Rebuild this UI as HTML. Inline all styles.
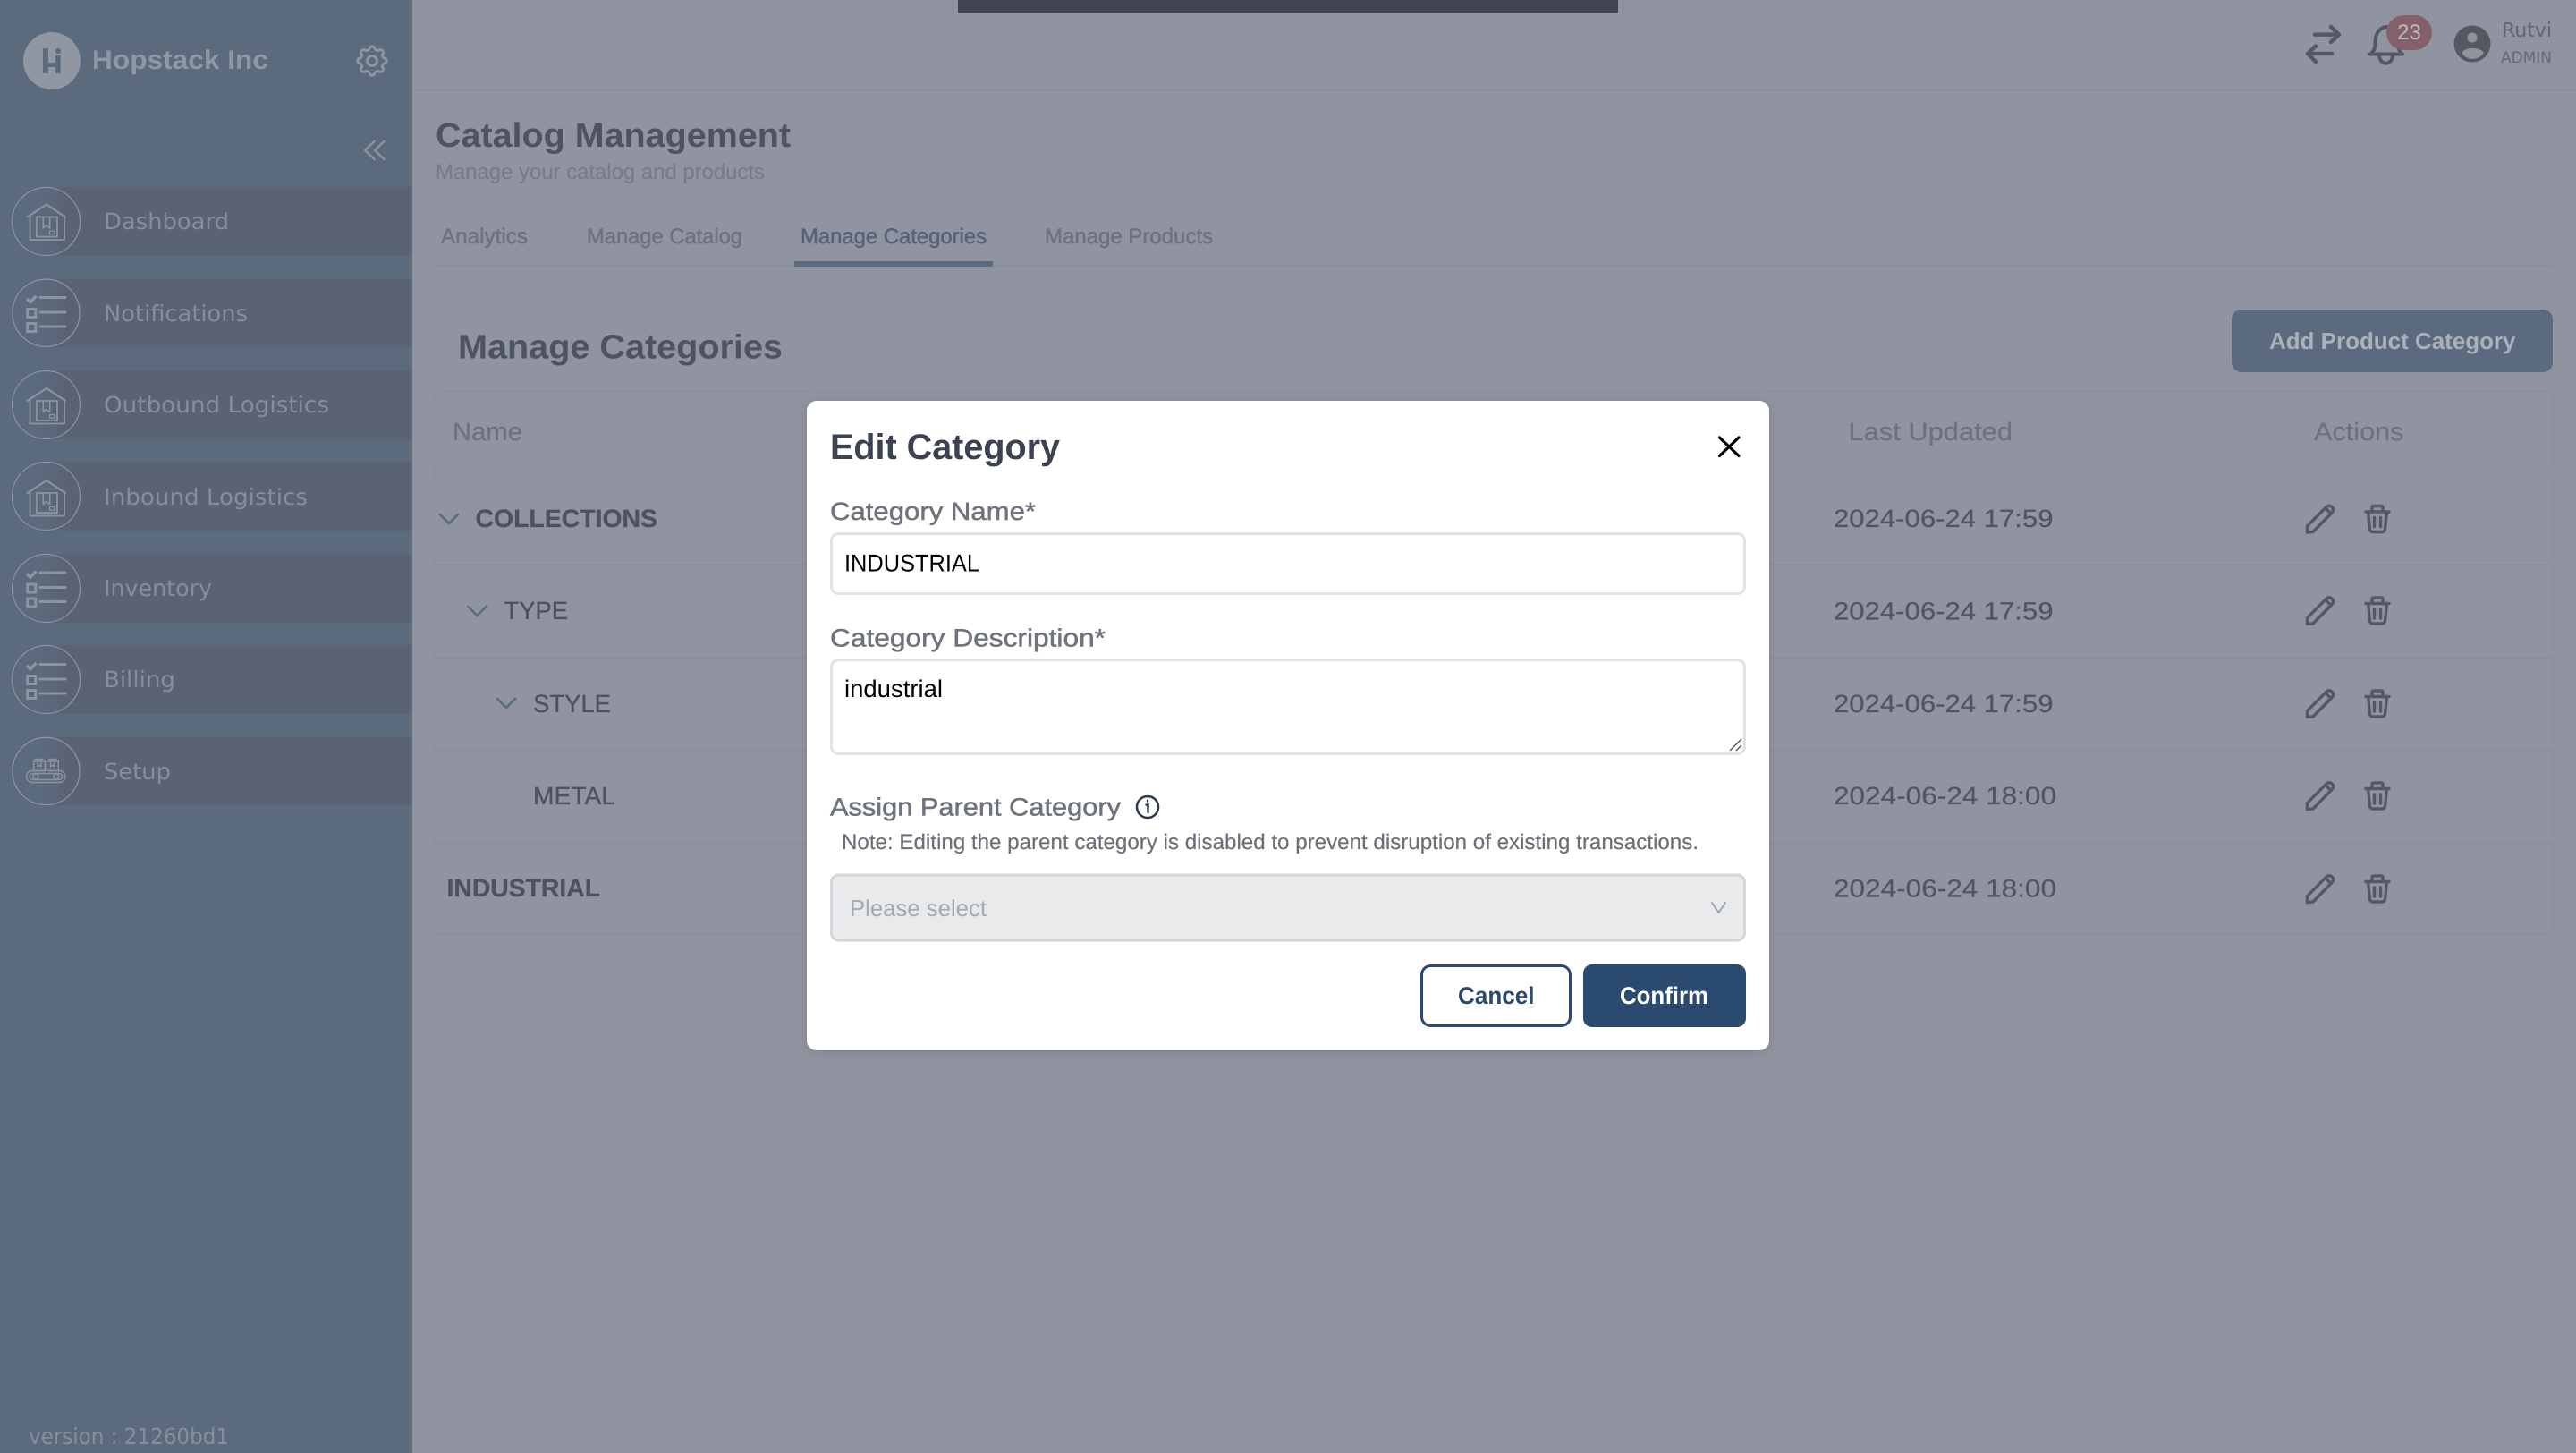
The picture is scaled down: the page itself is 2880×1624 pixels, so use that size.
<!DOCTYPE html>
<html lang="en">
<head>
<meta charset="utf-8">
<title>Catalog Management - Edit Category</title>
<style>
html,body{margin:0;padding:0;background:#8f94a0;width:2880px;height:1624px;overflow:hidden}
svg{display:block}
text{font-family:"Liberation Sans",sans-serif;text-rendering:geometricPrecision}
.m{font-family:"DejaVu Sans","Liberation Sans",sans-serif}
.nav{font-size:25px;fill:#868e9d}
.b{font-weight:bold}
.tab{font-size:24px;fill:#6c7280;stroke:#6c7280;stroke-width:.5}
.date{font-size:28px;fill:#50555f;stroke:#50555f;stroke-width:.2}
.th{font-size:28px;fill:#6d7280;stroke:#6d7280;stroke-width:.3}
.cell{font-size:28px;fill:#4d525e;stroke:#4d525e;stroke-width:.3}
.lbl{font-size:28px;fill:#6f747c;stroke:#6f747c;stroke-width:.5}
.ic{fill:none;stroke:#8d93a0;stroke-linecap:round;stroke-linejoin:round}
.act{fill:none;stroke:#535862;stroke-width:3.4;stroke-linecap:round;stroke-linejoin:round}
</style>
</head>
<body>
<svg xmlns="http://www.w3.org/2000/svg" width="2880" height="1624" viewBox="0 0 2880 1624">
<defs>
<linearGradient id="bar" gradientUnits="userSpaceOnUse" x1="45" x2="72" y1="0" y2="0">
<stop offset="0" stop-color="#5c6a7e"/><stop offset="1" stop-color="#5a6374"/>
</linearGradient>
<filter id="sh" x="-5%" y="-5%" width="110%" height="110%"><feDropShadow dx="0" dy="2" stdDeviation="6" flood-color="#000" flood-opacity=".12"/></filter>
<g id="wh" class="ic" stroke-width="1.6">
<path d="M-21 -4.5 L0.5 -18.5 L21.5 -4.5" stroke-width="2"/>
<path d="M-18 -6 V21 H20.5 V-6" stroke-width="1.8"/>
<rect x="-10.5" y="-4.5" width="23" height="22" stroke-width="1.8"/>
<path d="M-3.2 -4.5 V8 L0 5 L4.2 8 V-4.5" stroke-width="1.6"/>
<rect x="4" y="11" width="5.6" height="3.6" stroke-width="1.3"/>
</g>
<g id="li" class="ic">
<path d="M-6.5 -17.5 H21.5 M-6.5 -1 H21.5 M-6.5 15 H21.5" stroke-width="3"/>
<path d="M-21.5 -16 L-17.5 -12.5 L-11 -19" stroke-width="3.4" stroke-linecap="butt" stroke-linejoin="miter"/>
<rect x="-20.8" y="-4.5" width="9" height="9" stroke-width="3" stroke-linejoin="miter"/>
<rect x="-20.8" y="11.5" width="9" height="9" stroke-width="3" stroke-linejoin="miter"/>
</g>
<g id="co" class="ic" stroke-width="1.4">
<rect x="-22" y="-0.5" width="43.5" height="13" rx="6.5"/>
<rect x="-18.5" y="2.5" width="36.5" height="7" rx="3.5"/>
<circle cx="-11.5" cy="6" r="3"/><circle cx="11.5" cy="6" r="3"/>
<rect x="-13.8" y="-11" width="12.6" height="10.5"/><rect x="0.8" y="-11" width="13" height="10.5"/>
<path d="M-9.5 -11 V-5 L-7.5 -7 L-5.5 -5 V-11 M5 -11 V-5 L7 -7 L9 -5 V-11"/>
<path d="M-12.5 -13.5 H-3.5 M2.5 -13.5 H11.5"/>
</g>
<g id="act">
<path class="act" d="M2579.5 588 L2601 566.5 Q2604 564 2607 566.5 Q2610 569.5 2607.5 572.5 L2586 594.5 L2579.5 595 Z"/>
<path class="act" d="M2600 568 L2606 574" stroke-width="2.6"/>
<path class="act" d="M2645 572 H2671 M2652 571 V567.5 Q2652 565.5 2654 565.5 H2662 Q2664 565.5 2664 567.5 V571 M2647.5 572 L2649.5 591.5 Q2650 594.5 2653 594.5 H2663 Q2666 594.5 2666.5 591.5 L2668.5 572 M2654.5 578.5 V588.5 M2661.5 578.5 V588.5"/>
</g>
<path id="chev" d="M0 0 L10 10 L20 0" fill="none" stroke="#5a6a80" stroke-width="2.6" stroke-linecap="round" stroke-linejoin="round"/>
</defs>

<!-- page -->
<rect width="2880" height="1624" fill="#8f94a0"/>
<rect x="1071" y="0" width="738" height="14" fill="#3f4450"/>
<rect x="461" y="100" width="2419" height="1.5" fill="#898e9a"/>

<!-- sidebar -->
<rect width="461" height="1624" fill="#5c6a7e"/>
<circle cx="58" cy="68" r="32" fill="#9096a2"/>
<path d="M48 54 h6 v16 h8 v-8 h5.7 v20 h-5.7 v-7 h-8 v7 h-6 z" fill="#5c6a7e"/>
<circle cx="65" cy="57" r="3" fill="#5c6a7e"/>
<text x="103" y="77" font-size="30" font-weight="bold" fill="#9096a2" textLength="197" lengthAdjust="spacingAndGlyphs">Hopstack Inc</text>
<g transform="translate(416,68) scale(1.8) translate(-12,-12)" fill="none" stroke="#9096a2" stroke-width="1.6" stroke-linecap="round" stroke-linejoin="round">
<path d="M10.325 4.317c.426-1.756 2.924-1.756 3.35 0a1.724 1.724 0 002.573 1.066c1.543-.94 3.31.826 2.37 2.37a1.724 1.724 0 001.065 2.572c1.756.426 1.756 2.924 0 3.35a1.724 1.724 0 00-1.066 2.573c.94 1.543-.826 3.31-2.37 2.37a1.724 1.724 0 00-2.572 1.065c-.426 1.756-2.924 1.756-3.35 0a1.724 1.724 0 00-2.573-1.066c-1.543.94-3.31-.826-2.37-2.37a1.724 1.724 0 00-1.065-2.572c-1.756-.426-1.756-2.924 0-3.35a1.724 1.724 0 001.066-2.573c-.94-1.543.826-3.31 2.37-2.37.996.608 2.296.07 2.572-1.065z"/>
<path d="M15 12a3 3 0 11-6 0 3 3 0 016 0z"/>
</g>
<path d="M418.5 158 L408 168 L418.5 178 M429.5 158 L419 168 L429.5 178" fill="none" stroke="#8d93a0" stroke-width="2.4" stroke-linecap="round" stroke-linejoin="round"/>

<g fill="url(#bar)">
<rect x="40" y="209" width="421" height="77"/>
<rect x="40" y="312" width="421" height="75.5"/>
<rect x="40" y="414" width="421" height="77"/>
<rect x="40" y="516" width="421" height="77"/>
<rect x="40" y="619" width="421" height="77"/>
<rect x="40" y="721" width="421" height="77"/>
<rect x="40" y="824" width="421" height="76"/>
</g>
<g fill="none" stroke="#8f95a2" stroke-width="1.2">
<circle cx="51.5" cy="247.5" r="38"/><circle cx="51.5" cy="349.7" r="37.6"/><circle cx="51.5" cy="452.5" r="38"/><circle cx="51.5" cy="554.5" r="38"/><circle cx="51.5" cy="657.5" r="38"/><circle cx="51.5" cy="759.5" r="38"/><circle cx="51.5" cy="862" r="37.6"/>
</g>
<use href="#wh" x="51.5" y="247"/>
<use href="#li" x="51.5" y="350"/>
<use href="#wh" x="51.5" y="452.5"/>
<use href="#wh" x="51.5" y="555.5"/>
<use href="#li" x="51.5" y="657.5"/>
<use href="#li" x="51.5" y="760"/>
<use href="#co" x="51.5" y="862"/>

<text class="m nav" x="116" y="256" textLength="140" lengthAdjust="spacingAndGlyphs">Dashboard</text>
<text class="m nav" x="116" y="359" textLength="161" lengthAdjust="spacingAndGlyphs">Notifications</text>
<text class="m nav" x="116" y="461" textLength="252" lengthAdjust="spacingAndGlyphs">Outbound Logistics</text>
<text class="m nav" x="116" y="564" textLength="228" lengthAdjust="spacingAndGlyphs">Inbound Logistics</text>
<text class="m nav" x="116" y="666" textLength="121" lengthAdjust="spacingAndGlyphs">Inventory</text>
<text class="m nav" x="116" y="768" textLength="80" lengthAdjust="spacingAndGlyphs">Billing</text>
<text class="m nav" x="116" y="871" textLength="75" lengthAdjust="spacingAndGlyphs">Setup</text>
<text class="m nav" x="32" y="1614" textLength="224" lengthAdjust="spacingAndGlyphs">version : 21260bd1</text>

<!-- top right -->
<path d="M2588 38.7 H2615 M2606 30 L2615 38.7 L2606 47 M2607 60 H2580 M2589 51.5 L2580 60 L2589 69" fill="none" stroke="#535862" stroke-width="4.4" stroke-linecap="round" stroke-linejoin="round"/>
<path d="M2649.5 60.5 H2686 M2651 60 C2655 56 2655.5 52 2655.5 47 C2655.5 38 2660 31 2668 30 C2676 31 2681 38 2681 47 C2681 52 2681.5 56 2685 60 M2660 61 C2660 74 2675 74 2675 61" fill="none" stroke="#535862" stroke-width="4" stroke-linecap="round" stroke-linejoin="round"/>
<rect x="2668" y="17" width="51" height="39" rx="19.5" fill="#85606a"/>
<text x="2693.5" y="44" font-size="24" fill="#b9bcc6" text-anchor="middle">23</text>
<circle cx="2764" cy="49" r="20.5" fill="#535862"/>
<circle cx="2764" cy="42" r="5.5" fill="#90949f"/>
<path d="M2752 59 C2755 55 2760 54 2764.5 54 C2769 54 2774 55 2777 59 C2774 63.5 2769 66 2764.5 66 C2760 66 2755 63.5 2752 59Z" fill="#90949f"/>
<text class="m" x="2797" y="41" font-size="22" fill="#5f6571" textLength="56" lengthAdjust="spacingAndGlyphs">Rutvi</text>
<text class="m" x="2796" y="70" font-size="17" fill="#646a77" textLength="57" lengthAdjust="spacingAndGlyphs">ADMIN</text>

<!-- header -->
<text x="487" y="164" font-size="38" font-weight="bold" fill="#4e5362" textLength="397" lengthAdjust="spacingAndGlyphs">Catalog Management</text>
<text x="487" y="200" font-size="24" fill="#777c8a" stroke="#777c8a" stroke-width=".2" textLength="368" lengthAdjust="spacingAndGlyphs">Manage your catalog and products</text>

<!-- tabs -->
<text class="tab" x="493" y="272" textLength="97" lengthAdjust="spacingAndGlyphs">Analytics</text>
<text class="tab" x="656" y="272" textLength="174" lengthAdjust="spacingAndGlyphs">Manage Catalog</text>
<text class="tab" x="895" y="272" style="fill:#55637a;stroke:#55637a" textLength="208" lengthAdjust="spacingAndGlyphs">Manage Categories</text>
<text class="tab" x="1168" y="272" textLength="188" lengthAdjust="spacingAndGlyphs">Manage Products</text>
<rect x="486" y="296.5" width="2368" height="1.5" fill="#868b97"/>
<rect x="888" y="292" width="222" height="6" fill="#5c6a7e"/>

<text x="512" y="400.5" font-size="38" font-weight="bold" fill="#4e5362" textLength="363" lengthAdjust="spacingAndGlyphs">Manage Categories</text>
<rect x="2495" y="346" width="359" height="70" rx="11" fill="#5b6a7e"/>
<text x="2537" y="390" font-size="26" font-weight="bold" fill="#abb0ba" textLength="275.5" lengthAdjust="spacingAndGlyphs">Add Product Category</text>

<!-- table -->
<rect x="485.5" y="437.5" width="2368.5" height="607" rx="6" fill="none" stroke="#8a8f9b" stroke-width="1.5"/>
<g fill="#888d99">
<rect x="486" y="527.5" width="2368" height="1.2"/>
<rect x="486" y="631" width="2368" height="1.2"/>
<rect x="486" y="734.5" width="2368" height="1.2"/>
<rect x="486" y="838" width="2368" height="1.2"/>
<rect x="486" y="942" width="2368" height="1.2"/>
</g>
<text class="th" x="506" y="492" textLength="78" lengthAdjust="spacingAndGlyphs">Name</text>
<text class="th" x="2066.5" y="492" textLength="183.5" lengthAdjust="spacingAndGlyphs">Last Updated</text>
<text class="th" x="2587" y="492" textLength="100.5" lengthAdjust="spacingAndGlyphs">Actions</text>

<use href="#chev" x="492" y="575"/>
<text class="cell b" x="531.5" y="589" textLength="203.5" lengthAdjust="spacingAndGlyphs">COLLECTIONS</text>
<use href="#chev" x="523.5" y="678"/>
<text class="cell" x="563.5" y="692" textLength="71.5" lengthAdjust="spacingAndGlyphs">TYPE</text>
<use href="#chev" x="556" y="781"/>
<text class="cell" x="596" y="796" textLength="87" lengthAdjust="spacingAndGlyphs">STYLE</text>
<text class="cell" x="596" y="899" textLength="92" lengthAdjust="spacingAndGlyphs">METAL</text>
<text class="cell b" x="499.5" y="1002" textLength="171.5" lengthAdjust="spacingAndGlyphs">INDUSTRIAL</text>

<text class="date" x="2050" y="589" textLength="245.5" lengthAdjust="spacingAndGlyphs">2024-06-24 17:59</text>
<text class="date" x="2050" y="692.5" textLength="245.5" lengthAdjust="spacingAndGlyphs">2024-06-24 17:59</text>
<text class="date" x="2050" y="796" textLength="245.5" lengthAdjust="spacingAndGlyphs">2024-06-24 17:59</text>
<text class="date" x="2050" y="899" textLength="249" lengthAdjust="spacingAndGlyphs">2024-06-24 18:00</text>
<text class="date" x="2050" y="1002.5" textLength="249" lengthAdjust="spacingAndGlyphs">2024-06-24 18:00</text>

<use href="#act"/>
<use href="#act" y="102.5"/>
<use href="#act" y="206.5"/>
<use href="#act" y="309.5"/>
<use href="#act" y="413.5"/>

<!-- modal -->
<rect x="902" y="448" width="1076" height="726" rx="11" fill="#fff" filter="url(#sh)"/>
<text x="928" y="513" font-size="40" font-weight="bold" fill="#3d4250" textLength="257" lengthAdjust="spacingAndGlyphs">Edit Category</text>
<path d="M1922.5 489 L1944 509.5 M1944 489 L1922.5 509.5" stroke="#000" stroke-width="3.2" stroke-linecap="round" fill="none"/>

<text class="lbl" x="928" y="581" textLength="230" lengthAdjust="spacingAndGlyphs">Category Name*</text>
<rect x="929.5" y="596.5" width="1021" height="67" rx="8" fill="#fff" stroke="#e0e2e5" stroke-width="3"/>
<text x="944" y="638.5" font-size="27" fill="#000" textLength="151" lengthAdjust="spacingAndGlyphs">INDUSTRIAL</text>

<text class="lbl" x="928" y="722.5" textLength="308" lengthAdjust="spacingAndGlyphs">Category Description*</text>
<rect x="929.5" y="737.5" width="1021" height="105" rx="8" fill="#fff" stroke="#e0e2e5" stroke-width="3"/>
<text x="944" y="779" font-size="27" fill="#000" textLength="110" lengthAdjust="spacingAndGlyphs">industrial</text>
<path d="M1934 839 L1947 826 M1941 839 L1947 833" stroke="#555" stroke-width="1.4" fill="none"/>

<text class="lbl" x="928" y="911.5" textLength="325" lengthAdjust="spacingAndGlyphs">Assign Parent Category</text>
<circle cx="1283" cy="902" r="12" fill="none" stroke="#2e3a4e" stroke-width="2.6"/>
<path d="M1281.5 899.5 H1283.5 V908 M1283 894.8 V895.6" fill="none" stroke="#2e3a4e" stroke-width="2.4" stroke-linecap="round"/>
<text x="941" y="949" font-size="24" fill="#6b7078" stroke="#6b7078" stroke-width=".2" textLength="958" lengthAdjust="spacingAndGlyphs">Note: Editing the parent category is disabled to prevent disruption of existing transactions.</text>

<rect x="929.5" y="978" width="1021" height="73" rx="8" fill="#e8eaec" stroke="#d4d6da" stroke-width="3"/>
<text x="950" y="1024" font-size="26" fill="#a5a9b0" textLength="153" lengthAdjust="spacingAndGlyphs">Please select</text>
<path d="M1914 1009 L1921.5 1020 L1929 1009" fill="none" stroke="#9aa0a8" stroke-width="1.8" stroke-linecap="round" stroke-linejoin="round"/>

<rect x="1589.5" y="1079.5" width="166" height="67" rx="10" fill="#fff" stroke="#2b4a6f" stroke-width="3"/>
<text x="1630" y="1122" font-size="27" font-weight="bold" fill="#2b4a6f" textLength="85.5" lengthAdjust="spacingAndGlyphs">Cancel</text>
<rect x="1770" y="1078" width="182" height="70" rx="10" fill="#2b4a6f"/>
<text x="1811" y="1122" font-size="27" font-weight="bold" fill="#fff" textLength="99" lengthAdjust="spacingAndGlyphs">Confirm</text>
</svg>
</body>
</html>
